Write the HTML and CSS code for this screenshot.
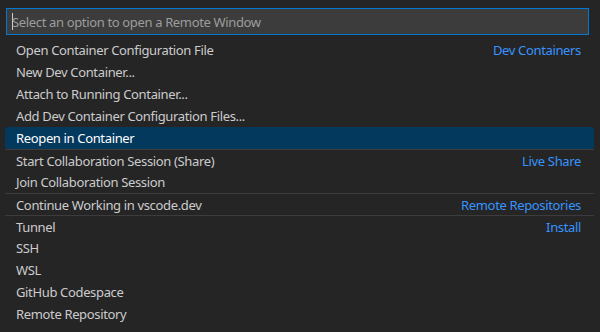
FILE: index.html
```html
<!DOCTYPE html>
<html>
<head>
<meta charset="utf-8">
<link rel="stylesheet" href="styles.css">
</head>
<body>
<div class="quick-input">
  <div class="input-box"><span class="cursor"></span><span class="placeholder">Select an option to open a Remote Window</span></div>
  <div class="list">
    <div class="row"><span class="label">Open Container Configuration File</span><span class="group">Dev Containers</span></div>
    <div class="row"><span class="label">New Dev Container...</span></div>
    <div class="row"><span class="label">Attach to Running Container...</span></div>
    <div class="row"><span class="label">Add Dev Container Configuration Files...</span></div>
    <div class="row active"><span class="label">Reopen in Container</span></div>
    <div class="row sep"><span class="label">Start Collaboration Session (Share)</span><span class="group">Live Share</span></div>
    <div class="row"><span class="label">Join Collaboration Session</span></div>
    <div class="row sep"><span class="label">Continue Working in vscode.dev</span><span class="group">Remote Repositories</span></div>
    <div class="row sep"><span class="label">Tunnel</span><span class="group">Install</span></div>
    <div class="row"><span class="label">SSH</span></div>
    <div class="row"><span class="label">WSL</span></div>
    <div class="row"><span class="label">GitHub Codespace</span></div>
    <div class="row"><span class="label">Remote Repository</span></div>
  </div>
</div>
</body>
</html>
```
FILE: styles.css
```css
html, body {
  margin: 0;
  padding: 0;
  background: #252526;
  height: 100%;
  overflow: hidden;
}
body {
  font-family: "Noto Sans", "Open Sans", sans-serif;
  font-size: 13px;
  letter-spacing: -0.35px;
  color: #cccccc;
}
.quick-input {
  padding: 8px 5px 0 5px;
}
.input-box {
  margin: 0 6px 0 1px;
  height: 25px;
  border: 1px solid #0078d4;
  background: #3c3c3c;
  display: flex;
  align-items: center;
  padding-left: 5px;
  box-sizing: content-box;
}
.cursor {
  width: 1px;
  height: 17px;
  background: #cccccc;
  margin-right: -1px;
}
.placeholder {
  color: #9d9d9d;
  font-size: 13px;
}
.list {
  margin-top: 4px;
}
.row {
  height: 22px;
  display: flex;
  align-items: center;
  justify-content: space-between;
  padding: 0 13px 0 11px;
  border-radius: 3px;
  box-sizing: border-box;
  margin-right: 1px;
}
.row.sep {
  border-top: 1px solid #3c3c3c;
  border-radius: 0;
}
.row.active {
  background: #04395e;
  color: #ffffff;
}
.group {
  color: #3794ff;
}
```
